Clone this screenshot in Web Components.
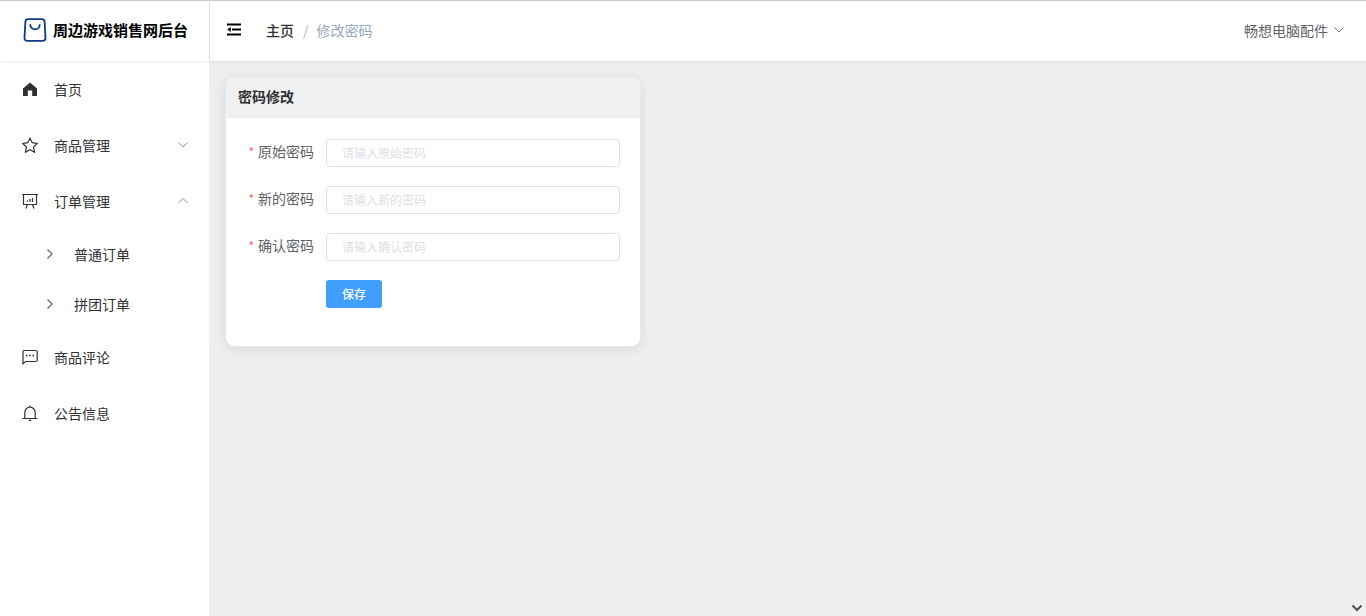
<!DOCTYPE html>
<html lang="zh-CN">
<head>
<meta charset="UTF-8">
<meta name="viewport" content="width=device-width, initial-scale=1">
<title>修改密码</title>
<style>
  body {
    margin: 0;
    color: #303133;
    background: #efefef;
    font: 14px/20px "Noto Sans CJK SC", sans-serif;
  }
</style>
</head>
<body>
<admin-layout>
  <brand-logo slot="brand">周边游戏销售网后台</brand-logo>
  <top-bar slot="bar" user="畅想电脑配件">
    <crumb-link>主页</crumb-link>
    <crumb-link current>修改密码</crumb-link>
  </top-bar>

  <menu-item slot="menu" icon="home">首页</menu-item>
  <menu-group slot="menu" icon="star" label="商品管理"></menu-group>
  <menu-group slot="menu" icon="board" label="订单管理" open>
    <menu-item icon="right" sub>普通订单</menu-item>
    <menu-item icon="right" sub>拼团订单</menu-item>
  </menu-group>
  <menu-item slot="menu" icon="chat">商品评论</menu-item>
  <menu-item slot="menu" icon="bell">公告信息</menu-item>

  <panel-card heading="密码修改">
    <password-form></password-form>
  </panel-card>
</admin-layout>

<script>
const ICONS = {
  home: `<path d="M8 1.6 1 7.4V15h4.8V9.5h4.4V15H15V7.4z" fill="currentColor" stroke="none"/>`,
  star: `<path d="M8 1.2 10.2 5.7 15.3 6.4 11.6 10 12.5 15.2 8 12.8 3.5 15.2 4.4 10 .7 6.4 5.8 5.7z"/>`,
  board: `<path d="M0 1.5h16M1.5 1.5v10h13v-10M5.5 11.5 4 15.5M10.5 11.5 12 15.5M5.5 7.5v1.5M8 6v3M10.5 5v4"/>`,
  chat: `<path d="M2 1.5h12q1.2 0 1.2 1.2v8.6q0 1.2-1.2 1.2H3.5L1 14.8V2.7q0-1.2 1-1.2z"/><path d="M4 6.5h1.5M7.2 6.5h1.6M10.5 6.5H12" stroke-width="1.5"/>`,
  bell: `<path d="M.5 13.5h15M2.8 13.5V7.4a5.2 5.2 0 0 1 10.4 0v6.1M8 .4V2M6.8 15.4h2.4"/>`,
  right: `<path d="M5.5 3.5 10 8l-4.5 4.5"/>`,
  down: `<path d="M3.5 5.5 8 10l4.5-4.5"/>`,
  up: `<path d="M3.5 10 8 5.5l4.5 4.5"/>`,
  fold: `<path d="M1 2.5h14M6 7.5h9M1 12.5h14" stroke-width="2.2"/><path d="M4.8 4.9v5.2L1.2 7.5z" fill="currentColor" stroke="none"/>`,
  bag: `<path d="M3.4 .7h9.2q1.7 0 1.8 1.7l.6 10.9q0 1.9-1.9 1.9H2.9Q1 15.2 1 13.3L1.6 2.4Q1.7 .7 3.4 .7z"/><path d="M4.8 4.2a3.2 3.4 0 0 0 6.4 0" stroke-width="1.2"/>`
};

const BASE = `
  * { box-sizing: border-box; }
  button, input { font: inherit; color: inherit; }
  a { color: inherit; text-decoration: none; }
`;

class BaseElement extends HTMLElement {
  constructor() {
    super();
    this.attachShadow({ mode: "open" });
  }

  connectedCallback() {
    this.render();
  }

  draw(css, html) {
    this.shadowRoot.innerHTML = `<style>${BASE}${css}</style>${html}`;
  }
}

class UiIcon extends BaseElement {
  render() {
    this.draw(`
      :host { display: block; flex: none; width: 16px; height: 16px; }
      svg { display: block; width: 100%; height: 100%; fill: none; stroke: currentColor; }
    `, `<svg viewBox="0 0 16 16" aria-hidden="true">${ICONS[this.getAttribute("name")]}</svg>`);
  }
}

class AdminLayout extends BaseElement {
  render() {
    this.draw(`
      :host {
        display: grid;
        grid-template: 61px 1fr / 210px 1fr;
        min-height: 100vh;
      }
      .brand, .bar {
        background: #fff;
        border-top: 1px solid #c8c8c8;
        box-shadow: 0 1px 4px rgba(0, 21, 41, .08);
        z-index: 1;
      }
      .brand { border-right: 1px solid #ebebeb; }
      aside { background: #fff; border-right: 1px solid #f0f0f0; }
      nav ::slotted(*) { stroke-width: 1.2px; }
      main { position: relative; padding: 15px; }
      .more { position: absolute; right: 1px; bottom: 0; color: #505050; stroke-width: 2px; }
    `, `
      <div class="brand"><slot name="brand"></slot></div>
      <header class="bar"><slot name="bar"></slot></header>
      <aside><nav><slot name="menu"></slot></nav></aside>
      <main><slot></slot><ui-icon class="more" name="down"></ui-icon></main>
    `);
  }
}

class BrandLogo extends BaseElement {
  render() {
    this.draw(`
      :host {
        display: flex;
        align-items: center;
        gap: 6px;
        height: 58px;
        padding-left: 23px;
        color: #000;
        font-size: 15px;
        font-weight: bold;
        white-space: nowrap;
      }
      ui-icon { width: 24px; height: 24px; color: #103a86; stroke-width: 1.2px; }
    `, `<ui-icon name="bag"></ui-icon><slot></slot>`);
  }
}

class TopBar extends BaseElement {
  render() {
    this.draw(`
      :host { display: flex; align-items: center; height: 58px; padding: 0 19px 0 16px; }
      button { display: flex; align-items: center; gap: 3px; padding: 0; border: 0; background: none; }
      .fold { color: #000; }
      nav { display: flex; margin-left: 24px; }
      .user { margin-left: auto; color: #606266; }
      .user ui-icon { color: #6b7c93; }
    `, `
      <button class="fold" type="button" aria-label="收起菜单"><ui-icon name="fold"></ui-icon></button>
      <nav><slot></slot></nav>
      <button class="user" type="button">${this.getAttribute("user")}<ui-icon name="down"></ui-icon></button>
    `);
  }
}

class CrumbLink extends BaseElement {
  render() {
    this.draw(`
      :host { display: flex; color: #303133; font-weight: 500; }
      :host([current]) { color: #97a8be; font-weight: normal; }
      :host([current])::before { content: "/"; margin: 0 8px 0 9px; color: #b4b8c0; }
    `, `<a href="#"><slot></slot></a>`);
  }
}

class MenuItem extends BaseElement {
  render() {
    this.draw(`
      :host { display: block; }
      a { display: flex; align-items: center; gap: 16px; height: 56px; padding-left: 22px; }
      :host([sub]) a { height: 50px; padding-left: 42px; }
      :host([sub]) ui-icon { color: #606266; }
    `, `<a href="#"><ui-icon name="${this.getAttribute("icon")}"></ui-icon><slot></slot></a>`);
  }
}

class MenuGroup extends BaseElement {
  static observedAttributes = ["open"];

  attributeChangedCallback() {
    if (this.isConnected) this.render();
  }

  render() {
    const open = this.hasAttribute("open");
    this.draw(`
      :host { display: block; }
      button {
        display: flex;
        align-items: center;
        gap: 16px;
        width: 100%;
        height: 56px;
        padding: 0 18px 0 22px;
        border: 0;
        background: none;
      }
      .arrow { margin-left: auto; color: #909399; stroke-width: 1px; }
      div[hidden] { display: none; }
    `, `
      <button type="button" aria-expanded="${open}">
        <ui-icon name="${this.getAttribute("icon")}"></ui-icon>
        ${this.getAttribute("label")}
        <ui-icon class="arrow" name="${open ? "up" : "down"}"></ui-icon>
      </button>
      <div ${open ? "" : "hidden"}><slot></slot></div>
    `);
    this.shadowRoot.querySelector("button").addEventListener("click", () => {
      this.toggleAttribute("open");
    });
  }
}

class PanelCard extends BaseElement {
  render() {
    this.draw(`
      :host {
        display: block;
        box-sizing: border-box;
        max-width: 416px;
        border: 1px solid #e6e9f2;
        border-radius: 10px;
        background: #fff;
        box-shadow: 0 2px 12px rgba(0, 0, 0, .1);
        overflow: hidden;
      }
      h2 {
        margin: 0;
        padding: 9px 12px 11px;
        border-bottom: 1px solid #ebeef5;
        background: #f0f0f0;
        font-size: 14px;
        line-height: 20px;
      }
      .body { padding: 21px 20px 38px; }
    `, `<h2>${this.getAttribute("heading")}</h2><div class="body"><slot></slot></div>`);
  }
}

class PasswordField extends BaseElement {
  render() {
    const label = this.getAttribute("label");
    this.draw(`
      :host { display: flex; }
      label { flex: none; width: 80px; padding-right: 12px; color: #606266; line-height: 24px; text-align: right; }
      label::before { content: "*"; margin-right: 4px; color: #f56c6c; font-size: 12px; }
      input {
        flex: 1;
        min-width: 0;
        height: 28px;
        padding: 0 15px 2px;
        border: 1px solid #dcdfe6;
        border-radius: 4px;
        background: #fff;
        outline: none;
        font-size: 12px;
      }
      input:focus { border-color: #409eff; }
      input::placeholder { color: #dcdfe6; }
    `, `
      <label for="field">${label}</label>
      <input id="field" type="password" placeholder="请输入${label}">
    `);
  }
}

class PasswordForm extends BaseElement {
  render() {
    this.draw(`
      :host { display: block; }
      form { display: flex; flex-direction: column; gap: 19px; }
      button {
        align-self: flex-start;
        height: 28px;
        margin-left: 80px;
        padding: 0 16px;
        border: 0;
        border-radius: 3px;
        background: #409eff;
        color: #fff;
        font-size: 12px;
        font-weight: 500;
      }
    `, `
      <form>
        <password-field label="原始密码"></password-field>
        <password-field label="新的密码"></password-field>
        <password-field label="确认密码"></password-field>
        <button type="button">保存</button>
      </form>
    `);
  }
}

customElements.define("ui-icon", UiIcon);
customElements.define("admin-layout", AdminLayout);
customElements.define("brand-logo", BrandLogo);
customElements.define("top-bar", TopBar);
customElements.define("crumb-link", CrumbLink);
customElements.define("menu-item", MenuItem);
customElements.define("menu-group", MenuGroup);
customElements.define("panel-card", PanelCard);
customElements.define("password-field", PasswordField);
customElements.define("password-form", PasswordForm);
</script>
</body>
</html>
